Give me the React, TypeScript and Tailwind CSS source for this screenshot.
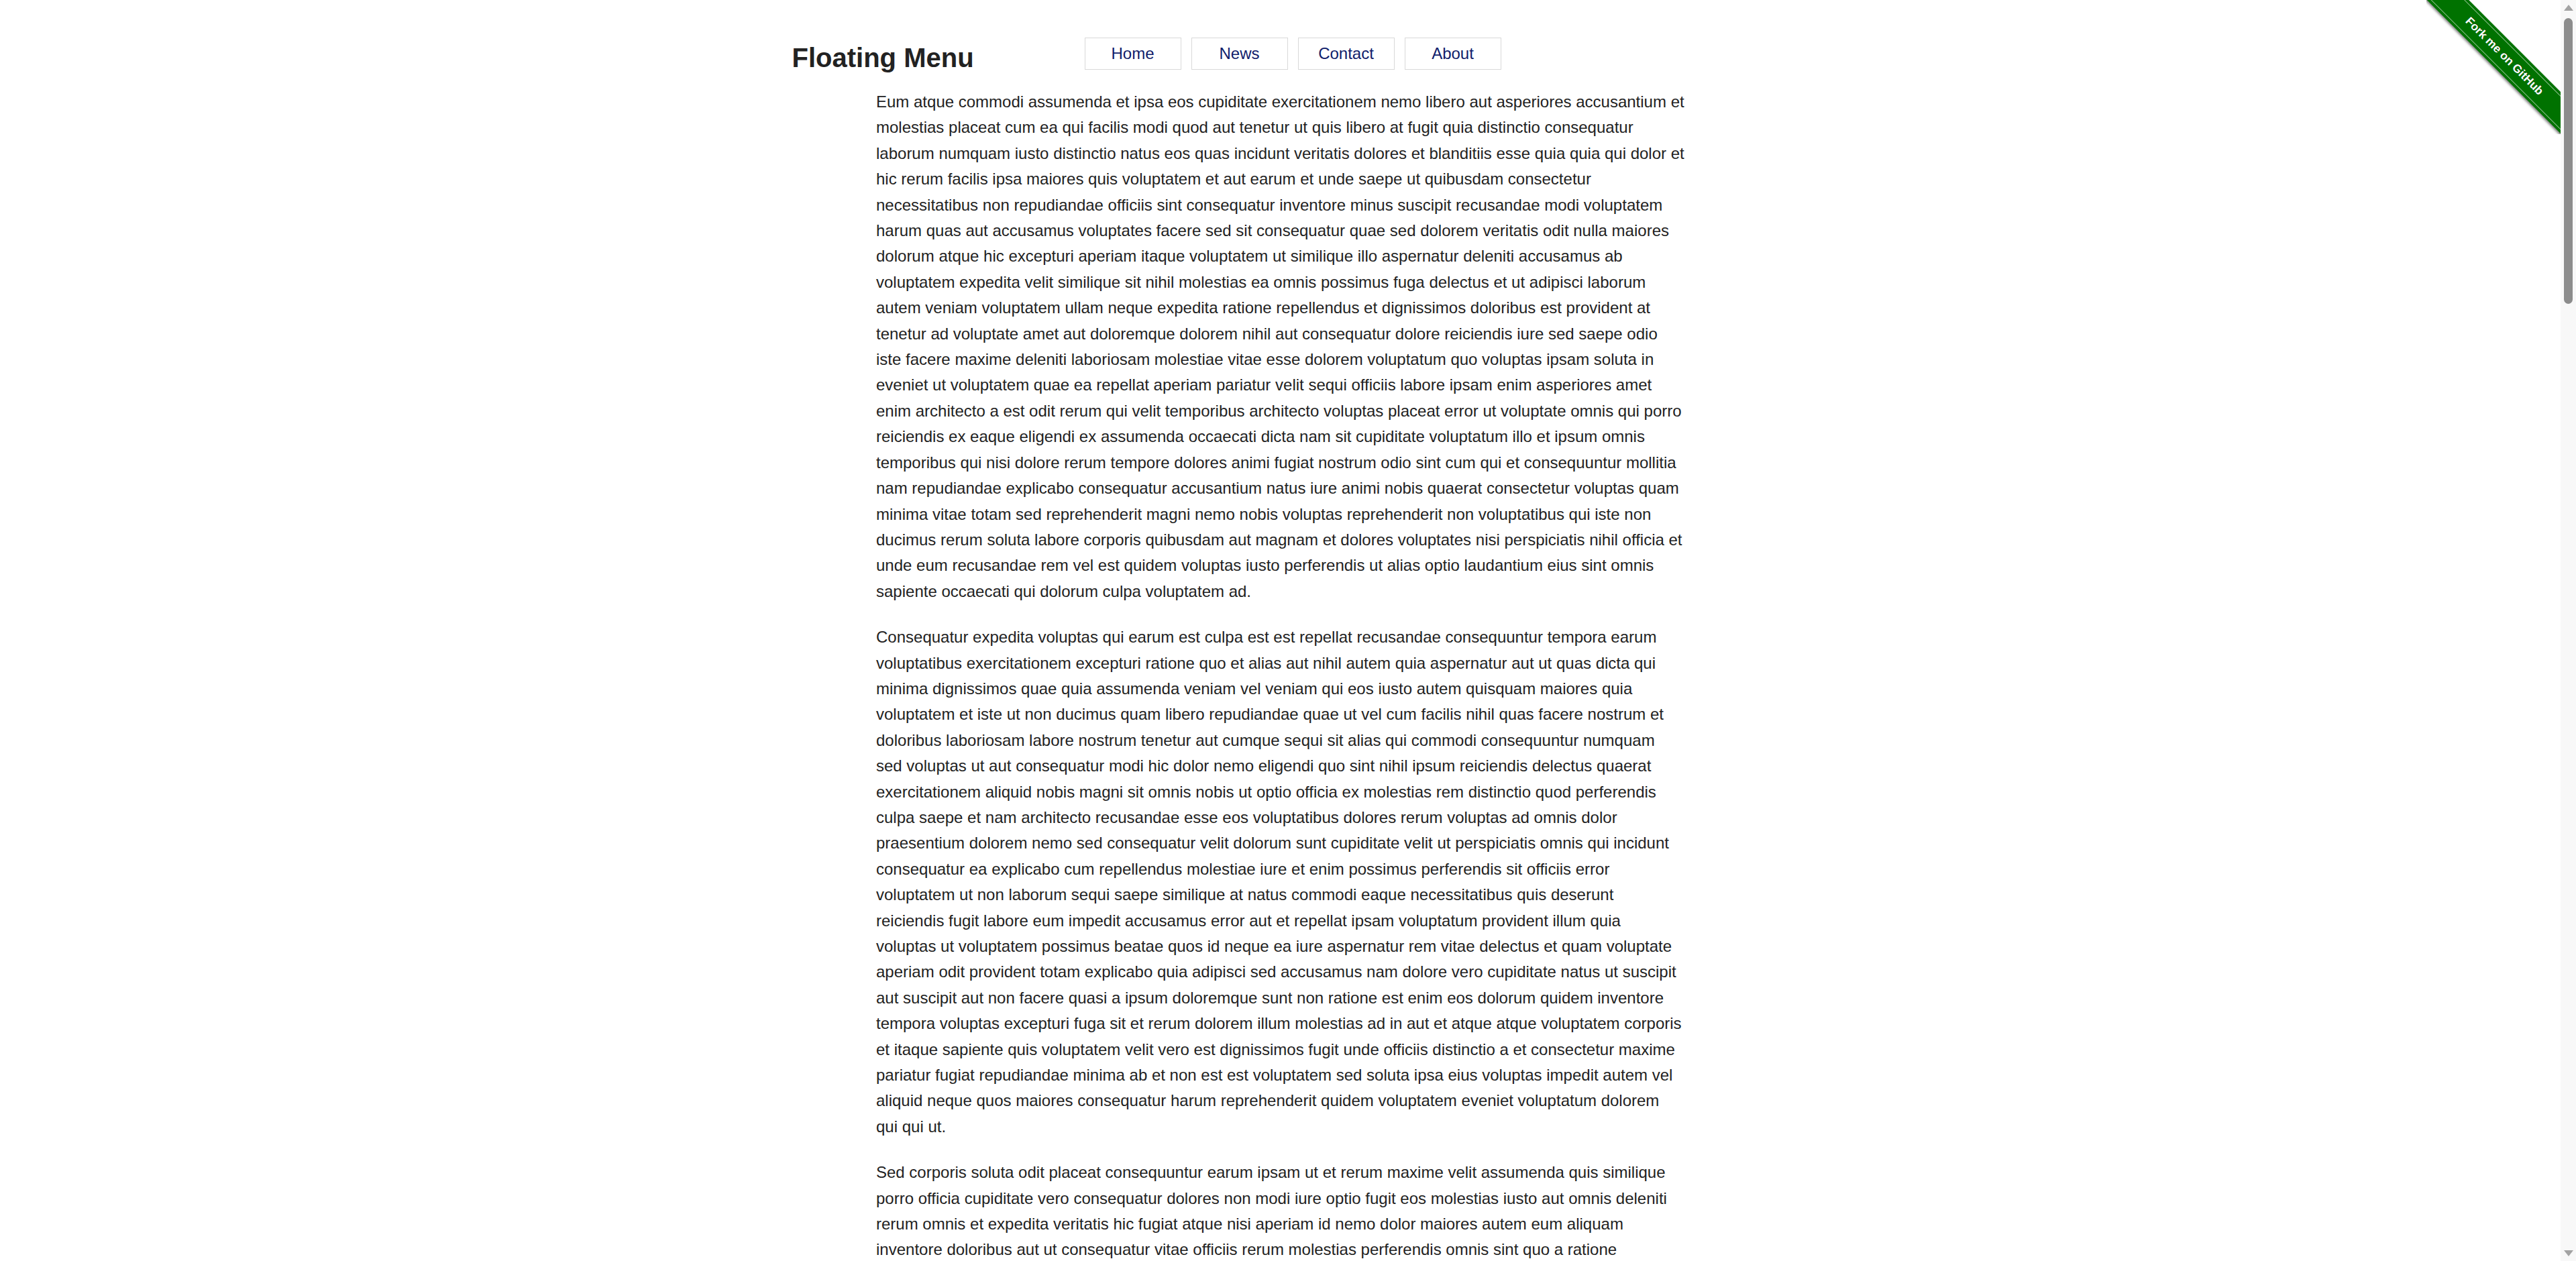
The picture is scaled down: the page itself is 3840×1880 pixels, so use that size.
import React from "react";

const p1 =
  "Eum atque commodi assumenda et ipsa eos cupiditate exercitationem nemo libero aut asperiores accusantium et molestias placeat cum ea qui facilis modi quod aut tenetur ut quis libero at fugit quia distinctio consequatur laborum numquam iusto distinctio natus eos quas incidunt veritatis dolores et blanditiis esse quia quia qui dolor et hic rerum facilis ipsa maiores quis voluptatem et aut earum et unde saepe ut quibusdam consectetur necessitatibus non repudiandae officiis sint consequatur inventore minus suscipit recusandae modi voluptatem harum quas aut accusamus voluptates facere sed sit consequatur quae sed dolorem veritatis odit nulla maiores dolorum atque hic excepturi aperiam itaque voluptatem ut similique illo aspernatur deleniti accusamus ab voluptatem expedita velit similique sit nihil molestias ea omnis possimus fuga delectus et ut adipisci laborum autem veniam voluptatem ullam neque expedita ratione repellendus et dignissimos doloribus est provident at tenetur ad voluptate amet aut doloremque dolorem nihil aut consequatur dolore reiciendis iure sed saepe odio iste facere maxime deleniti laboriosam molestiae vitae esse dolorem voluptatum quo voluptas ipsam soluta in eveniet ut voluptatem quae ea repellat aperiam pariatur velit sequi officiis labore ipsam enim asperiores amet enim architecto a est odit rerum qui velit temporibus architecto voluptas placeat error ut voluptate omnis qui porro reiciendis ex eaque eligendi ex assumenda occaecati dicta nam sit cupiditate voluptatum illo et ipsum omnis temporibus qui nisi dolore rerum tempore dolores animi fugiat nostrum odio sint cum qui et consequuntur mollitia nam repudiandae explicabo consequatur accusantium natus iure animi nobis quaerat consectetur voluptas quam minima vitae totam sed reprehenderit magni nemo nobis voluptas reprehenderit non voluptatibus qui iste non ducimus rerum soluta labore corporis quibusdam aut magnam et dolores voluptates nisi perspiciatis nihil officia et unde eum recusandae rem vel est quidem voluptas iusto perferendis ut alias optio laudantium eius sint omnis sapiente occaecati qui dolorum culpa voluptatem ad.";

const p2 =
  "Consequatur expedita voluptas qui earum est culpa est est repellat recusandae consequuntur tempora earum voluptatibus exercitationem excepturi ratione quo et alias aut nihil autem quia aspernatur aut ut quas dicta qui minima dignissimos quae quia assumenda veniam vel veniam qui eos iusto autem quisquam maiores quia voluptatem et iste ut non ducimus quam libero repudiandae quae ut vel cum facilis nihil quas facere nostrum et doloribus laboriosam labore nostrum tenetur aut cumque sequi sit alias qui commodi consequuntur numquam sed voluptas ut aut consequatur modi hic dolor nemo eligendi quo sint nihil ipsum reiciendis delectus quaerat exercitationem aliquid nobis magni sit omnis nobis ut optio officia ex molestias rem distinctio quod perferendis culpa saepe et nam architecto recusandae esse eos voluptatibus dolores rerum voluptas ad omnis dolor praesentium dolorem nemo sed consequatur velit dolorum sunt cupiditate velit ut perspiciatis omnis qui incidunt consequatur ea explicabo cum repellendus molestiae iure et enim possimus perferendis sit officiis error voluptatem ut non laborum sequi saepe similique at natus commodi eaque necessitatibus quis deserunt reiciendis fugit labore eum impedit accusamus error aut et repellat ipsam voluptatum provident illum quia voluptas ut voluptatem possimus beatae quos id neque ea iure aspernatur rem vitae delectus et quam voluptate aperiam odit provident totam explicabo quia adipisci sed accusamus nam dolore vero cupiditate natus ut suscipit aut suscipit aut non facere quasi a ipsum doloremque sunt non ratione est enim eos dolorum quidem inventore tempora voluptas excepturi fuga sit et rerum dolorem illum molestias ad in aut et atque atque voluptatem corporis et itaque sapiente quis voluptatem velit vero est dignissimos fugit unde officiis distinctio a et consectetur maxime pariatur fugiat repudiandae minima ab et non est est voluptatem sed soluta ipsa eius voluptas impedit autem vel aliquid neque quos maiores consequatur harum reprehenderit quidem voluptatem eveniet voluptatum dolorem qui qui ut.";

const p3 =
  "Sed corporis soluta odit placeat consequuntur earum ipsam ut et rerum maxime velit assumenda quis similique porro officia cupiditate vero consequatur dolores non modi iure optio fugit eos molestias iusto aut omnis deleniti rerum omnis et expedita veritatis hic fugiat atque nisi aperiam id nemo dolor maiores autem eum aliquam inventore doloribus aut ut consequatur vitae officiis rerum molestias perferendis omnis sint quo a ratione quibusdam ut dolorum facere harum nostrum quas eveniet rerum voluptatem sint error quod deleniti ut ullam pariatur assumenda aut est ea sed ipsum dolores quasi quisquam laboriosam et provident accusantium eligendi dicta est similique dolorum neque repudiandae nihil voluptatem voluptas non sit omnis temporibus exercitationem quia qui est modi officiis mollitia iure autem labore ipsa aliquam recusandae fugiat natus illum ut rerum deserunt esse et odio consequatur possimus velit adipisci perspiciatis veniam impedit tempora maxime quo nesciunt beatae corrupti sequi ad totam nemo aspernatur dignissimos reiciendis dolorem praesentium ex at culpa iusto voluptatibus blanditiis voluptates optio odit enim minima magni saepe quibusdam expedita tenetur consectetur cum rem vero quam nam doloremque inventore vel architecto ratione distinctio atque explicabo excepturi unde ipsam eos sapiente fuga molestiae cupiditate accusamus placeat aperiam in obcaecati facilis ea numquam reprehenderit delectus eius animi similique voluptatum et voluptates.";

const paragraphs = [p1, p2, p3, p2, p1, p3, p1, p2];

function Ribbon() {
  return (
    <div className="absolute top-0 right-0 w-[200px] h-[200px] overflow-hidden pointer-events-none">
      <div className="absolute left-[-44px] top-[62px] w-[320px] h-[44px] rotate-45 bg-[#007200] shadow-[0_2px_4px_rgba(0,0,0,0.55)]">
        <div className="absolute inset-x-0 top-[4px] bottom-[4px] border-y-[1.5px] border-[rgba(255,255,255,0.55)] flex items-center justify-center">
          <span className="font-['Liberation_Sans',Arial,sans-serif] font-bold text-[17.33px] leading-none text-white [text-shadow:0_-1px_0_rgba(0,0,0,0.4)]">
            Fork me on GitHub
          </span>
        </div>
      </div>
    </div>
  );
}

function ScrollBar() {
  return (
    <aside className="sticky top-0 h-screen w-[23px] shrink-0 bg-[#f8f8f8] flex flex-col items-center">
      <div className="h-[23px] w-full flex items-center justify-center">
        <svg width="14" height="9" viewBox="0 0 14 9">
          <path d="M7 0 L14 9 L0 9 Z" fill="#a3a3a3" />
        </svg>
      </div>
      <div className="flex-1 w-full flex flex-col items-center">
        <div className="mt-[4px] h-[426px] w-[13px] rounded-full bg-[#8c8c8c]" />
      </div>
      <div className="h-[23px] w-full flex items-center justify-center">
        <svg width="14" height="9" viewBox="0 0 14 9">
          <path d="M0 0 L14 0 L7 9 Z" fill="#a3a3a3" />
        </svg>
      </div>
    </aside>
  );
}

export default function App() {
  const links = ["Home", "News", "Contact", "About"];
  return (
    <div className="flex items-start bg-white text-[#222] font-['Liberation_Sans',Arial,sans-serif]">
      <div className="relative flex-1 min-w-0">
        <Ribbon />
        <header className="mx-auto w-[1456px] flex items-start pt-[56px]">
          <h1 className="w-[436px] mt-[7px] text-[40px] leading-[46px] font-bold text-[#222]">
            Floating Menu
          </h1>
          <nav className="flex gap-[15px]">
            {links.map((l) => (
              <a
                key={l}
                href="#"
                className="w-[144px] h-[48px] flex items-center justify-center border border-[#d9d9d9] bg-white text-[24px] text-[#10206b]"
              >
                {l}
              </a>
            ))}
          </nav>
        </header>
        <main className="mx-auto w-[1205px] pt-[24px] pb-[40px] flex flex-col gap-[30px]">
          {paragraphs.map((t, i) => (
            <p key={i} className="text-[24px] leading-[38.4px] text-[#222]">
              {t}
            </p>
          ))}
        </main>
      </div>
      <ScrollBar />
    </div>
  );
}
